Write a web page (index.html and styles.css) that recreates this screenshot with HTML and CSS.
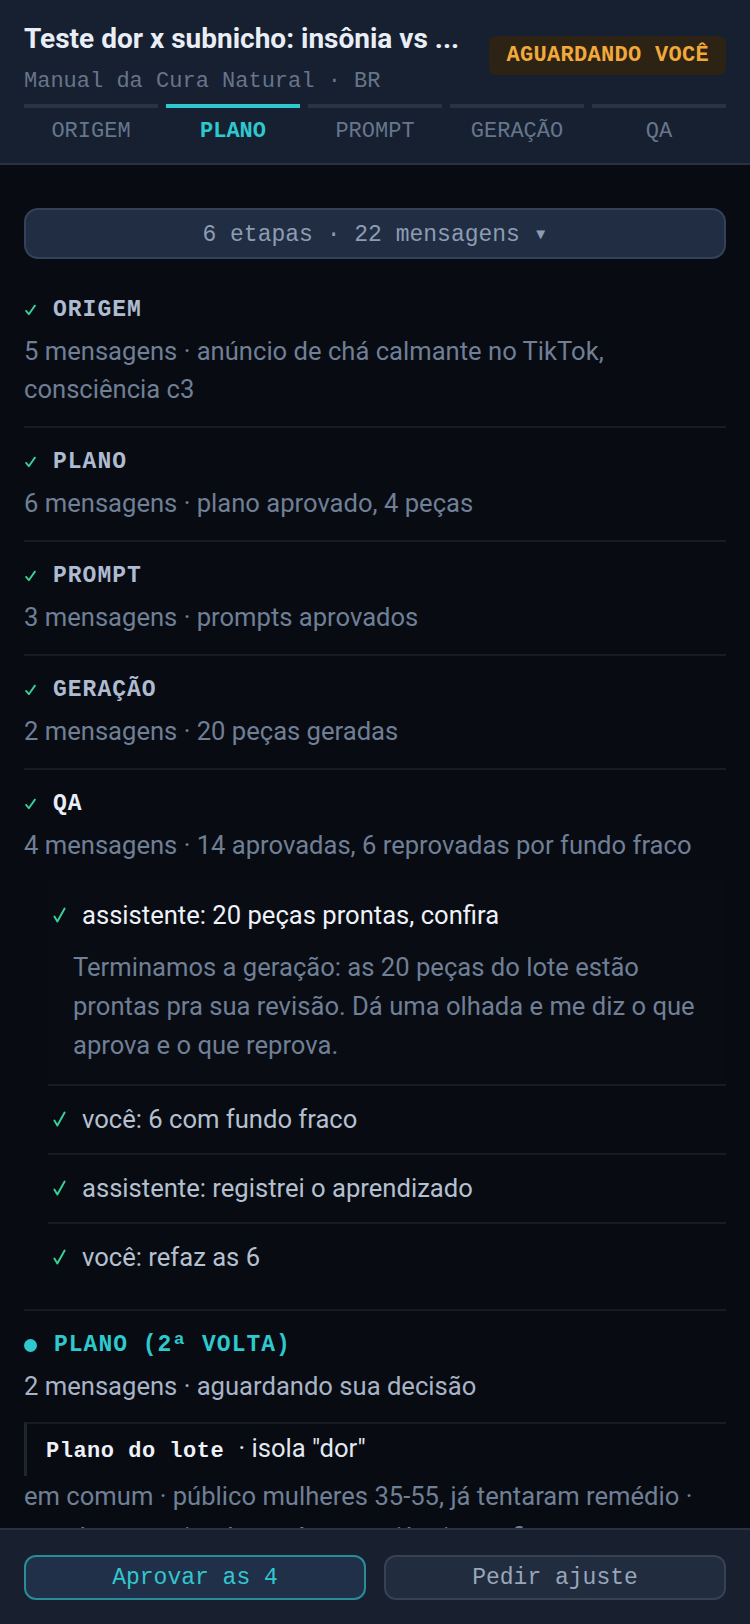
FILE: index.html
```html
<!DOCTYPE html>
<html lang="pt-BR">
<head>
    <meta charset="UTF-8">
    <meta name="viewport" content="width=device-width, initial-scale=1.0">
    <title>Teste dor x subnicho</title>
    <link rel="stylesheet" href="styles.css">
</head>
<body>
    <header class="top">
        <div class="top-row">
            <div class="top-text">
                <h1 class="title">Teste dor x subnicho: insônia vs ...</h1>
                <div class="subtitle">Manual da Cura Natural · BR</div>
            </div>
            <span class="badge">AGUARDANDO VOCÊ</span>
        </div>
        <nav class="steps">
            <div class="step"><span class="step-bar"></span><span class="step-name">ORIGEM</span></div>
            <div class="step active"><span class="step-bar"></span><span class="step-name">PLANO</span></div>
            <div class="step"><span class="step-bar"></span><span class="step-name">PROMPT</span></div>
            <div class="step"><span class="step-bar"></span><span class="step-name">GERAÇÃO</span></div>
            <div class="step"><span class="step-bar"></span><span class="step-name">QA</span></div>
        </nav>
    </header>

    <main class="content">
        <button class="summary">6 etapas · 22 mensagens ▾</button>

        <section class="stage">
            <div class="stage-head">
                <svg class="check-s" viewBox="0 0 12 12"><path d="M1.2 7 L4.2 10.6 L10.8 1.2"/></svg>
                <span class="stage-name">ORIGEM</span>
            </div>
            <p class="stage-desc">5 mensagens · anúncio de chá calmante no TikTok, consciência c3</p>
        </section>

        <section class="stage">
            <div class="stage-head">
                <svg class="check-s" viewBox="0 0 12 12"><path d="M1.2 7 L4.2 10.6 L10.8 1.2"/></svg>
                <span class="stage-name">PLANO</span>
            </div>
            <p class="stage-desc">6 mensagens · plano aprovado, 4 peças</p>
        </section>

        <section class="stage">
            <div class="stage-head">
                <svg class="check-s" viewBox="0 0 12 12"><path d="M1.2 7 L4.2 10.6 L10.8 1.2"/></svg>
                <span class="stage-name">PROMPT</span>
            </div>
            <p class="stage-desc">3 mensagens · prompts aprovados</p>
        </section>

        <section class="stage">
            <div class="stage-head">
                <svg class="check-s" viewBox="0 0 12 12"><path d="M1.2 7 L4.2 10.6 L10.8 1.2"/></svg>
                <span class="stage-name">GERAÇÃO</span>
            </div>
            <p class="stage-desc">2 mensagens · 20 peças geradas</p>
        </section>

        <section class="stage open">
            <div class="stage-head">
                <svg class="check-s" viewBox="0 0 12 12"><path d="M1.2 7 L4.2 10.6 L10.8 1.2"/></svg>
                <span class="stage-name">QA</span>
            </div>
            <p class="stage-desc">4 mensagens · 14 aprovadas, 6 reprovadas por fundo fraco</p>

            <ul class="messages">
                <li class="msg expanded">
                    <div class="msg-head">
                        <svg class="check-m" viewBox="0 0 12 15"><path d="M1.2 9 L4 13.6 L10.8 1.4"/></svg>
                        <span>assistente: 20 peças prontas, confira</span>
                    </div>
                    <p class="msg-body">Terminamos a geração: as 20 peças do lote estão prontas pra sua revisão. Dá uma olhada e me diz o que aprova e o que reprova.</p>
                </li>
                <li class="msg">
                    <div class="msg-head">
                        <svg class="check-m" viewBox="0 0 12 15"><path d="M1.2 9 L4 13.6 L10.8 1.4"/></svg>
                        <span>você: 6 com fundo fraco</span>
                    </div>
                </li>
                <li class="msg">
                    <div class="msg-head">
                        <svg class="check-m" viewBox="0 0 12 15"><path d="M1.2 9 L4 13.6 L10.8 1.4"/></svg>
                        <span>assistente: registrei o aprendizado</span>
                    </div>
                </li>
                <li class="msg">
                    <div class="msg-head">
                        <svg class="check-m" viewBox="0 0 12 15"><path d="M1.2 9 L4 13.6 L10.8 1.4"/></svg>
                        <span>você: refaz as 6</span>
                    </div>
                </li>
            </ul>
        </section>

        <section class="stage current">
            <div class="stage-head">
                <span class="dot"></span>
                <span class="stage-name">PLANO (2ª VOLTA)</span>
            </div>
            <p class="stage-desc">2 mensagens · aguardando sua decisão</p>
            <div class="plan-box"><strong>Plano do lote</strong> · isola "dor"</div>
            <p class="plan-text">em comum · público mulheres 35-55, já tentaram remédio · gancho a receita da vovó que a ciência confirma · consciência c3 · 4 peças: 2 estáticos e 2 carrosséis, fundo claro e texto grande</p>
        </section>
    </main>

    <footer class="actions">
        <button class="btn primary">Aprovar as 4</button>
        <button class="btn">Pedir ajuste</button>
    </footer>
</body>
</html>
```

FILE: styles.css
```css
body {
    margin: 0;
    background: #080b12;
    font-family: Roboto, "Liberation Sans", sans-serif;
    color: #6f7f96;
}

.top {
    background: #172030;
    border-bottom: 2px solid #283242;
    padding: 20px 24px 16px;
}

.top-row {
    display: flex;
    align-items: flex-start;
    justify-content: space-between;
    gap: 20px;
}

.top-text {
    min-width: 0;
}

.title {
    margin: 0;
    font-size: 28px;
    line-height: 38px;
    font-weight: 700;
    color: #e9eef6;
    white-space: nowrap;
    overflow: hidden;
    text-overflow: ellipsis;
}

.subtitle {
    margin-top: 9px;
    font-family: "Liberation Mono", "DejaVu Sans Mono", monospace;
    font-size: 22px;
    line-height: 30px;
    color: #66758a;
}

.badge {
    flex-shrink: 0;
    margin-top: 16px;
    padding: 0 17px;
    background: #2c2314;
    color: #f2a93b;
    border-radius: 7px;
    font-family: "Liberation Mono", "DejaVu Sans Mono", monospace;
    font-weight: 700;
    font-size: 22px;
    letter-spacing: 0.3px;
    line-height: 39px;
}

.steps {
    display: grid;
    grid-template-columns: repeat(5, 1fr);
    gap: 8px;
    margin-top: 7px;
}

.step {
    display: flex;
    flex-direction: column;
    align-items: center;
}

.step-bar {
    align-self: stretch;
    height: 4px;
    background: #2a3343;
}

.step-name {
    margin-top: 9px;
    font-family: "Liberation Mono", "DejaVu Sans Mono", monospace;
    font-size: 22px;
    line-height: 30px;
    color: #66768c;
}

.step.active .step-bar {
    background: #2ec8cf;
}

.step.active .step-name {
    color: #2ec8cf;
    font-weight: 700;
}

.content {
    padding: 43px 24px 160px;
}

.summary {
    display: block;
    width: 100%;
    height: 51px;
    margin: 0 0 17px;
    background: #212d42;
    border: 2px solid #34415a;
    border-radius: 14px;
    font-family: "Liberation Mono", "DejaVu Sans Mono", monospace;
    font-size: 23px;
    color: #8d9cb3;
}

.stage {
    padding: 19px 0 18px;
    border-bottom: 2px solid #161b24;
}

.stage-head {
    display: flex;
    align-items: center;
    gap: 17px;
    height: 30px;
}

.check-s {
    width: 11px;
    height: 12px;
    margin-left: 1px;
    fill: none;
    stroke: #37d399;
    stroke-width: 2;
    stroke-linecap: round;
    stroke-linejoin: round;
}

.stage-name {
    font-family: "Liberation Mono", "DejaVu Sans Mono", monospace;
    font-weight: 700;
    font-size: 23px;
    letter-spacing: 1px;
    line-height: 30px;
    color: #aebbd0;
}

.stage.open .stage-name {
    color: #e9eef6;
}

.stage-desc {
    margin: 7px 0 0;
    font-size: 25.6px;
    line-height: 38px;
    color: #6f7f96;
}

.messages {
    list-style: none;
    margin: 16px 0 0 24px;
    padding: 0;
}

.msg {
    padding: 14px 0 15px;
    border-bottom: 2px solid #161b24;
}

.msg:last-child {
    border-bottom: none;
}

.msg.expanded {
    padding: 16px 0 19px;
    background: #090c13;
}

.msg-head {
    display: flex;
    align-items: center;
    gap: 16px;
    padding-left: 5px;
    font-size: 25.6px;
    line-height: 38px;
    color: #b5c0d0;
}

.msg.expanded .msg-head {
    color: #eef2f8;
}

.check-m {
    width: 13px;
    height: 16px;
    flex-shrink: 0;
    fill: none;
    stroke: #37d399;
    stroke-width: 1.8;
    stroke-linecap: round;
    stroke-linejoin: round;
}

.msg-body {
    margin: 14px 0 0;
    padding-left: 25px;
    font-size: 25.6px;
    line-height: 39px;
    color: #6f7f96;
}

.stage.current {
    border-bottom: none;
}

.dot {
    width: 13px;
    height: 13px;
    border-radius: 50%;
    background: #2ec8cf;
}

.stage.current .stage-name {
    color: #2ec8cf;
}

.stage.current .stage-desc {
    color: #a8b4c6;
}

.plan-box {
    margin-top: 17px;
    padding: 5px 19px;
    border-top: 2px solid #161b24;
    border-left: 3px solid #20262f;
    font-size: 25.6px;
    line-height: 38px;
    color: #e2e8f0;
}

.plan-box strong {
    margin-right: 8px;
    font-family: "Liberation Mono", "DejaVu Sans Mono", monospace;
    font-size: 22px;
    letter-spacing: 0.5px;
    color: #eef2f8;
}

.plan-text {
    margin: 0;
    font-size: 25.6px;
    line-height: 41px;
    color: #6f7f96;
}

.actions {
    position: fixed;
    left: 0;
    right: 0;
    bottom: 0;
    display: grid;
    grid-template-columns: 1fr 1fr;
    gap: 18px;
    padding: 25px 24px 24px;
    background: #182030;
    border-top: 2px solid #283242;
}

.btn {
    height: 45px;
    border-radius: 12px;
    border: 2px solid #364254;
    background: #212c3e;
    color: #98a6ba;
    font-family: "Liberation Mono", "DejaVu Sans Mono", monospace;
    font-size: 23px;
}

.btn.primary {
    border-color: #2a8c99;
    background: #213049;
    color: #33c6d0;
}
```
